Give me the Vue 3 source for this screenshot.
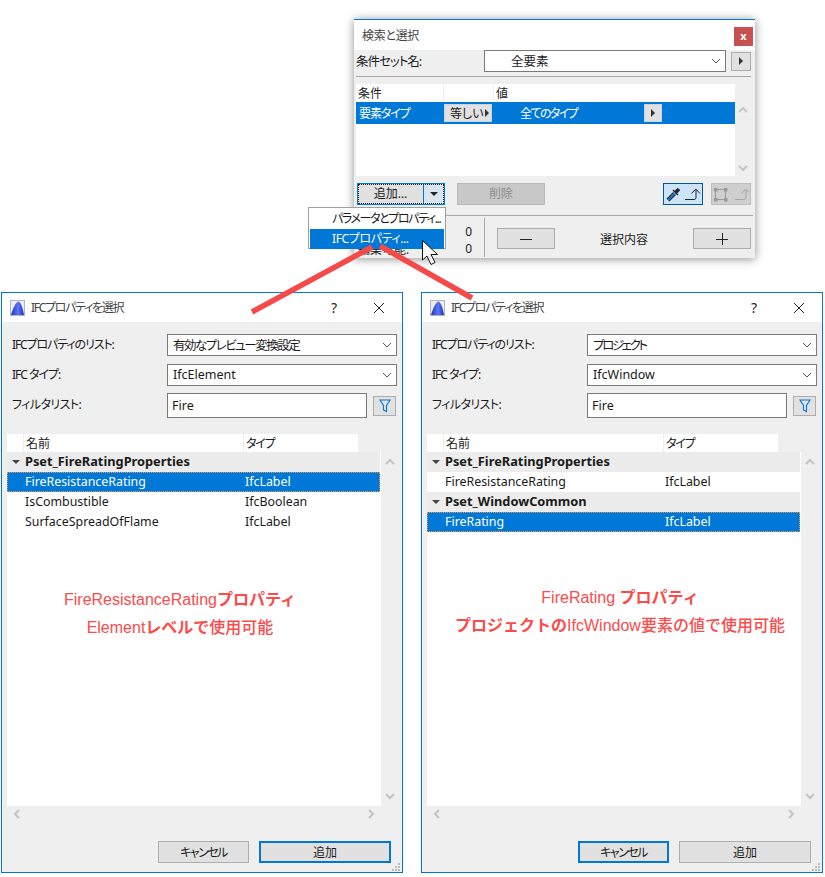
<script setup>
const dialogs = [
  {
    id: 'left', list: '有効なプレビュー変換設定', type: 'IfcElement', okFocus: true,
    rows: [
      { group: 'Pset_FireRatingProperties' },
      { name: 'FireResistanceRating', kind: 'IfcLabel', selected: true },
      { name: 'IsCombustible', kind: 'IfcBoolean' },
      { name: 'SurfaceSpreadOfFlame', kind: 'IfcLabel' },
    ],
    notes: [
      [{ t: 'FireResistanceRating' }, { t: 'プロパティ', b: true }],
      [{ t: 'Element' }, { t: 'レベルで', b: true }, { t: '使用可能', m: true }],
    ],
  },
  {
    id: 'right', list: 'プロジェクト', type: 'IfcWindow', okFocus: false,
    rows: [
      { group: 'Pset_FireRatingProperties' },
      { name: 'FireResistanceRating', kind: 'IfcLabel' },
      { group: 'Pset_WindowCommon' },
      { name: 'FireRating', kind: 'IfcLabel', selected: true },
    ],
    notes: [
      [{ t: 'FireRating ' }, { t: 'プロパティ', b: true }],
      [{ t: 'プロジェクトの', b: true }, { t: 'IfcWindow' }, { t: '要素の値で', m: true }, { t: '使用可能', m: true }],
    ],
  },
]
</script>

<template>
  <div class="stage">
    <section v-for="d in dialogs" :key="d.id" class="dialog" :class="'dialog-' + d.id">
      <header class="d-title">
        <svg class="d-logo" viewBox="0 0 15 16" width="15" height="16">
          <defs>
            <linearGradient :id="'lg-' + d.id" x1="0" y1="0" x2="1" y2="0">
              <stop offset="0" stop-color="#1c2fc4" />
              <stop offset="0.55" stop-color="#5f78f2" />
              <stop offset="1" stop-color="#1c2fc4" />
            </linearGradient>
          </defs>
          <rect x="0.500" y="0.500" width="14" height="15" fill="#eeeef2" stroke="#b4b4bc" />
          <path d="M1 15 C3 8 6 1.500 8.500 1.500 C11 2 13 9 14 15 Z" :fill="'url(#lg-' + d.id + ')'" />
        </svg>
        <span class="d-title-text">IFCプロパティを選択</span>
        <span class="d-help">?</span>
        <svg class="d-close" viewBox="0 0 12 12" width="12" height="12">
          <path d="M1 1 L11 11 M11 1 L1 11" stroke="#222" stroke-width="1" fill="none" />
        </svg>
      </header>

      <div class="d-body">
        <div class="form">
          <label class="f-label sp-a">IFCプロパティのリスト:</label>
          <div class="combo f-select"><span class="up1 sp-list">{{ d.list }}</span>
            <svg class="chev" viewBox="0 0 10 6" width="10" height="6"><path d="M1 1 L5 5 L9 1" fill="none" stroke="#555" /></svg>
          </div>
          <label class="f-label sp-b">IFC タイプ:</label>
          <div class="combo f-select"><span class="up1">{{ d.type }}</span>
            <svg class="chev" viewBox="0 0 10 6" width="10" height="6"><path d="M1 1 L5 5 L9 1" fill="none" stroke="#555" /></svg>
          </div>
          <label class="f-label sp-c">フィルタリスト:</label>
          <div class="filter-row">
            <div class="f-input">Fire</div>
            <div class="f-btn">
              <svg viewBox="0 0 12 14" width="12" height="14"><path d="M1 1 H11 L7.500 6.500 V12.500 L4.500 11 V6.500 Z" fill="none" stroke="#0078d7" stroke-width="1.100" /></svg>
            </div>
          </div>
        </div>

        <div class="l-head">
          <span class="lh-stub"></span>
          <span class="lh-name">名前</span>
          <span class="lh-type">タイプ</span>
        </div>

        <div class="l-wrap">
          <div class="l-list">
            <template v-for="(r, i) in d.rows" :key="i">
              <div v-if="r.group" class="l-group"><i class="tri-down"></i><span class="up1">{{ r.group }}</span></div>
              <div v-else class="l-row" :class="{ sel: r.selected }">
                <span class="c-name up1">{{ r.name }}</span><span class="up1">{{ r.kind }}</span>
              </div>
            </template>
            <div class="note">
              <p v-for="(line, i) in d.notes" :key="i">
                <span v-for="(s, j) in line" :key="j" :class="{ nb: s.b, nm: s.m }">{{ s.t }}</span>
              </p>
            </div>
          </div>
          <div class="v-scroll">
            <svg viewBox="0 0 10 7" width="10" height="7"><path d="M1 6 L5 2 L9 6" fill="none" stroke="#c4c4c4" stroke-width="2" /></svg>
            <svg viewBox="0 0 10 7" width="10" height="7"><path d="M1 1 L5 5 L9 1" fill="none" stroke="#c4c4c4" stroke-width="2" /></svg>
          </div>
        </div>

        <div class="h-scroll">
          <svg viewBox="0 0 7 10" width="7" height="10"><path d="M6 1 L2 5 L6 9" fill="none" stroke="#c4c4c4" stroke-width="2" /></svg>
          <svg viewBox="0 0 7 10" width="7" height="10"><path d="M1 1 L5 5 L1 9" fill="none" stroke="#c4c4c4" stroke-width="2" /></svg>
        </div>

        <footer class="d-foot">
          <button class="btn b-cancel" :class="{ focus: !d.okFocus }">キャンセル</button>
          <button class="btn b-ok" :class="{ focus: d.okFocus }">追加</button>
        </footer>
        <svg class="grip" viewBox="0 0 9 9" width="9" height="9">
          <path d="M7 1h2v2h-2zM4 4h2v2h-2zM7 4h2v2h-2zM1 7h2v2h-2zM4 7h2v2h-2zM7 7h2v2h-2z" fill="#bdbdbd" />
        </svg>
      </div>
    </section>

    <section class="palette">
      <header class="p-title">
        <span class="p-title-text">検索と選択</span>
        <span class="p-close">x</span>
      </header>
      <div class="p-body">
        <div class="p-set">
          <span class="p-set-label up1">条件セット名:</span>
          <div class="combo p-combo"><span class="up1">全要素</span>
            <svg class="chev" viewBox="0 0 10 6" width="10" height="6"><path d="M1 1 L5 5 L9 1" fill="none" stroke="#555" /></svg>
          </div>
          <span class="arrow-btn p-set-btn"><i class="tri-right"></i></span>
        </div>
        <div class="p-hr"></div>
        <div class="p-table-wrap">
          <div class="p-table">
            <div class="p-head"><span class="ph-a">条件</span><span class="ph-b"></span><span class="ph-c">値</span></div>
            <div class="p-sel">
              <span class="ps-a">要素タイプ</span>
              <span class="ps-eq">等しい<i class="tri-right"></i></span>
              <span class="ps-val">全てのタイプ</span>
              <span class="arrow-btn ps-btn"><i class="tri-right"></i></span>
            </div>
          </div>
          <div class="v-scroll p-scroll">
            <svg viewBox="0 0 10 7" width="10" height="7"><path d="M1 6 L5 2 L9 6" fill="none" stroke="#c4c4c4" stroke-width="2" /></svg>
            <svg viewBox="0 0 10 7" width="10" height="7"><path d="M1 1 L5 5 L9 1" fill="none" stroke="#c4c4c4" stroke-width="2" /></svg>
          </div>
        </div>
        <div class="p-actions">
          <div class="split">
            <span class="split-main">追加...</span>
            <span class="split-arrow"><i class="tri-down dark"></i></span>
          </div>
          <span class="p-del">削除</span>
          <span class="tool active">
            <svg viewBox="0 0 36 18" width="36" height="18">
              <path d="M3 15 L9.500 8.500" stroke="#223" stroke-width="4" fill="none" />
              <path d="M3 15 L9.500 8.500" stroke="#1f6fc0" stroke-width="2.400" fill="none" />
              <path d="M10.500 7.500 L14 4" stroke="#223" stroke-width="3.600" fill="none" />
              <path d="M8 5 L13 10" stroke="#223" stroke-width="1.500" fill="none" />
              <path d="M20 14.500 H29 C30.500 14.500 31 13.500 31 12 V5 M26.500 8.500 L30.800 4 L35 8.500" fill="none" stroke="#223" />
            </svg>
          </span>
          <span class="tool off">
            <svg viewBox="0 0 36 18" width="36" height="18">
              <rect x="2.500" y="4.500" width="10" height="10" fill="none" stroke="#999" />
              <path d="M1 3h3.500v3.500h-3.500zM11 3h3.500v3.500h-3.500zM1 13h3.500v3.500h-3.500zM11 13h3.500v3.500h-3.500z" fill="#999" />
              <path d="M22 14.500 H31 C32.500 14.500 33 13.500 33 12 V5 M28.500 8.500 L32.800 4 L36 7.500" fill="none" stroke="#a5a5a5" />
            </svg>
          </span>
        </div>
        <div class="p-hr2"></div>
        <div class="p-bottom">
          <div class="p-labels"><span></span><span>編集可能:</span></div>
          <div class="p-counts"><span>0</span><span>0</span></div>
          <div class="p-vsep"></div>
          <span class="pm">
            <svg viewBox="0 0 12 12" width="12" height="12"><path d="M0 6.500 H12" stroke="#222" /></svg>
          </span>
          <span class="p-sel-label">選択内容</span>
          <span class="pm">
            <svg viewBox="0 0 12 12" width="12" height="12"><path d="M0 6.500 H12 M6.500 0 V12" stroke="#222" /></svg>
          </span>
        </div>
      </div>
    </section>

    <div class="menu">
      <div class="m-item m-first">パラメータとプロパティ...</div>
      <div class="m-item m-on">IFCプロパティ...</div>
    </div>

    <svg class="arrows" viewBox="0 0 825 877" width="825" height="877">
      <path d="M252 312 L372 247 M380 246 L472 298" stroke="#f44a4a" stroke-width="5.500" fill="none" />
      <path d="M422.500 240.500 V260 L427 256 L431 264.500 L435 262.500 L431 254.500 L437.500 254.500 Z" fill="#fff" stroke="#111" stroke-width="1" />
    </svg>
  </div>
</template>

<style>
html, body { margin: 0; background: #fff; }
</style>

<style scoped>
.stage {
  position: relative;
  width: 825px;
  height: 877px;
  overflow: hidden;
  background: #fff;
  font-family: "Noto Sans", "Noto Sans CJK JP", sans-serif;
  font-size: 12px;
  font-feature-settings: "palt";
  color: #1a1a1a;
}
i { display: inline-block; }
.up1 { position: relative; top: -1px; }

/* dialogs */
.dialog {
  position: absolute;
  top: 292px;
  width: 402px;
  height: 581px;
  box-sizing: border-box;
  border: 1px solid #0078d7;
  background: #fff;
  display: flex;
  flex-direction: column;
}
.dialog-left { left: 1px; }
.dialog-right { left: 421px; }
.d-title {
  height: 29px;
  display: flex;
  align-items: center;
  padding-left: 8px;
  flex: none;
}
.d-logo { margin-right: 6px; }
.d-title-text { flex: 1; color: #444; position: relative; top: -1px; letter-spacing: -1.300px; }
.d-help { width: 14px; margin-right: 32px; text-align: center; font-size: 14px; color: #222; }
.d-close { margin-right: 17px; }
.d-body {
  position: relative;
  flex: 1;
  background: #efefef;
  padding-top: 12px;
  display: flex;
  flex-direction: column;
}
.form {
  display: grid;
  grid-template-columns: 155px 230px;
  row-gap: 8px;
  padding-left: 10px;
  align-items: center;
}
.f-label { position: relative; top: -1px; }
.sp-a { letter-spacing: -1.100px; }
.sp-b { letter-spacing: -1px; }
.sp-c { letter-spacing: -0.600px; top: -2px; }
.dialog-left .sp-list { letter-spacing: -1.500px; }
.dialog-right .sp-list { letter-spacing: -2.400px; }
.combo {
  box-sizing: border-box;
  background: #fff;
  border: 1px solid #7a7a7a;
  display: flex;
  align-items: center;
  justify-content: space-between;
}
.f-select { height: 22px; padding: 0 4px 0 5px; font-size: 12.500px; }
.chev { flex: none; }
.filter-row { display: flex; align-items: center; gap: 6px; margin-top: -1px; }
.f-input {
  box-sizing: border-box;
  width: 200px;
  height: 25px;
  background: #fff;
  border: 1px solid #7a7a7a;
  padding-left: 4px;
  line-height: 23px;
  font-size: 12.500px;
}
.f-btn {
  box-sizing: border-box;
  width: 23px;
  height: 20px;
  background: #e1e1e1;
  border: 1px solid #adadad;
  display: flex;
  align-items: center;
  justify-content: center;
}
.l-head {
  margin: 16px 0 0 5px;
  height: 18px;
  display: flex;
  flex: none;
  line-height: 20px;
}
.l-head span { background: #fff; display: block; padding-left: 2px; box-sizing: border-box; overflow: hidden; }
.lh-stub { width: 16px; margin-right: 1px; }
.lh-name { width: 219px; margin-right: 1px; }
.lh-type { width: 114px; padding-left: 1px; letter-spacing: -1.200px; }
.l-wrap { display: flex; height: 354px; flex: none; }
.l-list {
  width: 374px;
  margin-left: 5px;
  background: #fff;
  position: relative;
  box-sizing: border-box;
}
.l-group {
  height: 20px;
  width: 373px;
  background: #ececec;
  display: flex;
  align-items: center;
  font-weight: 700;
  font-size: 12.800px;
  color: #1a1a1a;
}
.tri-down {
  width: 0;
  height: 0;
  border-left: 4px solid transparent;
  border-right: 4px solid transparent;
  border-top: 4px solid #444;
  margin: 0 5px 0 5px;
}
.l-row {
  height: 20px;
  width: 373px;
  box-sizing: border-box;
  display: flex;
  align-items: center;
  padding-left: 18px;
  font-size: 12.400px;
  color: #1a1a1a;
}
.l-row.sel {
  background: #0078d7;
  color: #fff;
  outline: 1px dotted #e69a55;
  outline-offset: -1px;
}
.c-name { width: 220px; }
.note {
  position: absolute;
  left: 0;
  text-align: center;
  font-family: "Liberation Sans", "Noto Sans CJK JP", sans-serif;
  font-feature-settings: normal;
  font-size: 16px;
  line-height: 28px;
  color: #fb4b4b;
  white-space: nowrap;
}
.dialog-left .note { top: 134px; width: 346px; }
.dialog-right .note { top: 132px; width: 386px; }
.note p { margin: 0; }
.nb { font-weight: 700; }
.nm { font-weight: 500; }
.v-scroll {
  width: 17px;
  margin-left: 0;
  display: flex;
  flex-direction: column;
  justify-content: space-between;
  align-items: center;
  padding: 6px 0 6px;
  box-sizing: border-box;
  padding-left: 1px;
}
.h-scroll {
  display: flex;
  justify-content: space-between;
  height: 14px;
  align-items: center;
  box-sizing: border-box;
  padding: 0 27px 0 11px;
  margin-top: 1px;
}
.d-foot {
  display: flex;
  justify-content: flex-end;
  gap: 10px;
  padding: 20px 11px 0 0;
}
.btn {
  box-sizing: border-box;
  height: 22px;
  background: #e1e1e1;
  border: 1px solid #adadad;
  font: inherit;
  font-size: 12px;
  color: #1a1a1a;
  padding: 0;
}
.btn.focus { border: 2px solid #0078d7; }
.b-cancel { width: 91px; letter-spacing: -1.500px; }
.b-ok { width: 132px; }
.grip { position: absolute; right: 2px; bottom: 1px; }

/* palette */
.palette {
  position: absolute;
  left: 354px;
  top: 19px;
  width: 401px;
  height: 239px;
  box-sizing: border-box;
  border-top: 1px solid #0078d7;
  background: #fff;
  box-shadow: 0 1px 9px rgba(0, 0, 0, 0.45);
  display: flex;
  flex-direction: column;
}
.p-title {
  height: 30px;
  flex: none;
  display: flex;
  justify-content: space-between;
  align-items: flex-start;
}
.p-title-text { margin: 6px 0 0 8px; color: #444; letter-spacing: -0.300px; }
.p-close {
  width: 19px;
  height: 19px;
  margin: 7px 2px 0 0;
  background: #c75050;
  color: #fff;
  font-weight: 700;
  font-size: 11px;
  line-height: 17px;
  text-align: center;
}
.p-body { flex: 1; background: #efefef; display: flex; flex-direction: column; }
.p-set { display: flex; height: 22px; align-items: center; padding-left: 2px; flex: none; }
.p-set-label { width: 128px; font-size: 12.500px; white-space: nowrap; letter-spacing: -1px; }
.p-combo { width: 242px; height: 22px; padding: 0 4px 0 26px; font-size: 12.500px; }
.arrow-btn {
  box-sizing: border-box;
  background: #e1e1e1;
  border: 1px solid #adadad;
  display: flex;
  align-items: center;
  justify-content: center;
}
.p-set-btn { width: 20px; height: 19px; margin-left: 5px; }
.tri-right {
  width: 0;
  height: 0;
  border-top: 4px solid transparent;
  border-bottom: 4px solid transparent;
  border-left: 4px solid #333;
}
.p-hr { height: 1px; margin: 4px 4px 7px 2px; background: #a8a8a8; flex: none; }
.p-table-wrap { display: flex; height: 92px; flex: none; }
.p-table { width: 379px; margin-left: 2px; background: #fff; }
.p-head { display: flex; height: 18px; line-height: 20px; background: #efefef; }
.p-head span { background: #fff; box-sizing: border-box; display: block; overflow: hidden; }
.ph-a { width: 87px; padding-left: 2px; margin-right: 1px; }
.ph-b { width: 49px; margin-right: 1px; }
.ph-c { flex: 1; padding-left: 2px; }
.p-sel {
  height: 22px;
  background: #0078d7;
  color: #fff;
  display: flex;
  align-items: center;
  padding-left: 3px;
}
.ps-a { width: 85px; white-space: nowrap; letter-spacing: -1.100px; }
.ps-eq {
  box-sizing: border-box;
  width: 48px;
  height: 18px;
  background: #e1e1e1;
  border: 1px solid #c9d4dc;
  color: #1a1a1a;
  display: flex;
  align-items: center;
  justify-content: space-between;
  padding: 0 2px 0 5px;
  white-space: nowrap;
}
.ps-val { width: 152px; padding-left: 28px; box-sizing: border-box; white-space: nowrap; letter-spacing: -1.600px; }
.ps-btn { width: 18px; height: 18px; border-color: #c9d4dc; }
.p-scroll { width: 16px; padding: 22px 0 4px; }
.p-actions {
  display: flex;
  align-items: center;
  height: 22px;
  margin-top: 7px;
  padding-left: 3px;
  flex: none;
}
.split {
  box-sizing: border-box;
  width: 88px;
  height: 22px;
  display: flex;
  border: 1px solid #0078d7;
  background: #e1e1e1;
  outline: 1px dotted #222;
  outline-offset: -2px;
}
.split-main { width: 65px; text-align: center; line-height: 19px; }
.split-arrow {
  flex: 1;
  border-left: 1px solid #0078d7;
  background: #d8e6f2;
  display: flex;
  align-items: center;
  justify-content: center;
}
.tri-down.dark { border-top-color: #222; margin: 0; }
.p-del {
  box-sizing: border-box;
  width: 88px;
  height: 22px;
  margin-left: 12px;
  background: #c8c8c8;
  border: 1px solid #b8b8b8;
  color: #8c8c8c;
  text-align: center;
  line-height: 19px;
}
.tool {
  box-sizing: border-box;
  width: 40px;
  height: 22px;
  display: flex;
  align-items: center;
  justify-content: center;
}
.tool.active { margin-left: 118px; background: #cce4f7; border: 1px solid #005499; }
.tool.off { margin-left: 8px; background: #cfcfcf; border: 1px solid #bdbdbd; }
.p-hr2 { height: 1px; margin: 10px 2px 0 0; background: #a8a8a8; flex: none; }
.p-bottom { flex: 1; display: flex; align-items: center; }
.p-labels { width: 100px; height: 100%; display: flex; flex-direction: column; padding-left: 4px; box-sizing: border-box; justify-content: flex-end; line-height: 16px; }
.p-counts {
  width: 18px;
  display: flex;
  flex-direction: column;
  align-items: flex-end;
  line-height: 17px;
  margin-top: 5px;
}
.p-vsep { width: 1px; height: 39px; background: #a8a8a8; margin-left: 12px; }
.pm {
  box-sizing: border-box;
  width: 58px;
  height: 21px;
  background: #e1e1e1;
  border: 1px solid #adadad;
  display: flex;
  align-items: center;
  justify-content: center;
  margin-left: 12px;
  margin-top: 3px;
}
.p-sel-label { width: 138px; text-align: center; margin-top: 3px; }
.p-bottom .pm:last-child { margin-left: 0; }

/* menu */
.menu {
  position: absolute;
  left: 308px;
  top: 207px;
  width: 138px;
  height: 42px;
  box-sizing: border-box;
  background: #fff;
  border: 1px solid #a0a0a0;
  padding: 1px;
}
.m-item { height: 20px; line-height: 19px; padding-left: 22px; white-space: nowrap; letter-spacing: -0.400px; }
.m-first { letter-spacing: -1.400px; }
.m-on { background: #0078d7; color: #fff; }

.arrows { position: absolute; left: 0; top: 0; pointer-events: none; }
</style>
